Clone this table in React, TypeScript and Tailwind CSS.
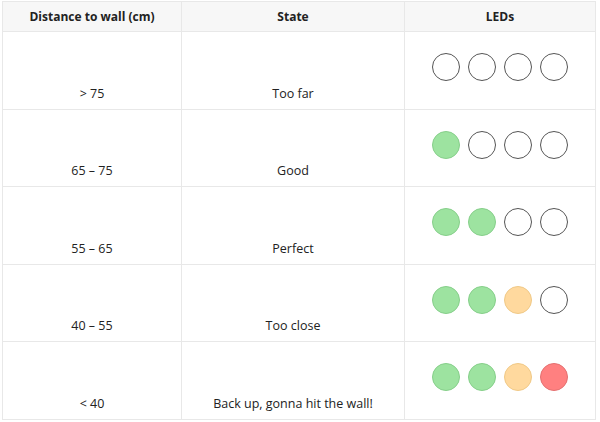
type Led = "off" | "green" | "orange" | "red";

const rows: { distance: string; state: string; leds: Led[] }[] = [
  { distance: "> 75", state: "Too far", leds: ["off", "off", "off", "off"] },
  { distance: "65 – 75", state: "Good", leds: ["green", "off", "off", "off"] },
  { distance: "55 – 65", state: "Perfect", leds: ["green", "green", "off", "off"] },
  { distance: "40 – 55", state: "Too close", leds: ["green", "green", "orange", "off"] },
  { distance: "< 40", state: "Back up, gonna hit the wall!", leds: ["green", "green", "orange", "red"] },
];

const ledClass: Record<Led, string> = {
  off: "bg-white border-[#555]",
  green: "bg-[#9de3a0] border-[#86cf8a]",
  orange: "bg-[#ffd99e] border-[#f0c987]",
  red: "bg-[#ff8080] border-[#e47070]",
};

function LedRow({ leds }: { leds: Led[] }) {
  return (
    <div className="flex justify-center gap-2">
      {leds.map((l, i) => (
        <span key={i} className={`block h-7 w-7 rounded-full border ${ledClass[l]}`} />
      ))}
    </div>
  );
}

export default function App() {
  return (
    <div className="h-[422px] w-[600px] bg-white pl-[2px] pt-[1px] font-['Open_Sans',sans-serif] text-[#222]">
      <table className="w-[594px] table-fixed border-collapse">
        <thead>
          <tr className="h-[30px] bg-[#f7f7f7] text-[12px] font-semibold">
            <th className="w-[179px] border border-[#e8e8e8]">Distance to wall (cm)</th>
            <th className="w-[223px] border border-[#e8e8e8]">State</th>
            <th className="border border-[#e8e8e8]">LEDs</th>
          </tr>
        </thead>
        <tbody className="text-[12.5px]">
          {rows.map((r, i) => (
            <tr key={r.distance} className={i % 2 === 0 ? "h-[78px]" : "h-[77px]"}>
              <td className="border border-[#e8e8e8] pb-[5px] text-center align-bottom">{r.distance}</td>
              <td className="border border-[#e8e8e8] pb-[5px] text-center align-bottom">{r.state}</td>
              <td className="border border-[#e8e8e8] pt-[21px] align-top">
                <LedRow leds={r.leds} />
              </td>
            </tr>
          ))}
        </tbody>
      </table>
    </div>
  );
}
